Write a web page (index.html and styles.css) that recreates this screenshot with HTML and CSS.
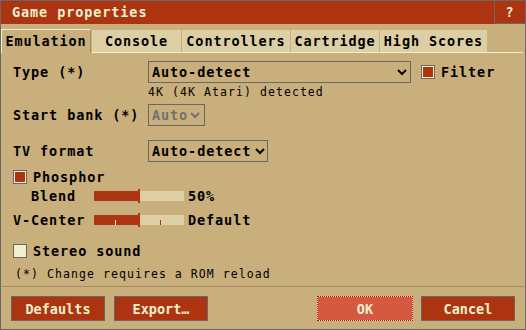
FILE: index.html
```html
<!DOCTYPE html>
<html lang="en">
<head>
    <meta charset="UTF-8">
    <title>Game properties</title>
    <link rel="stylesheet" href="styles.css">
</head>
<body>
    <div class="dialog">
        <div class="titlebar">
            <span class="title">Game properties</span>
            <span class="help">?</span>
        </div>

        <div class="tabs">
            <div class="tab active tab-emulation">Emulation</div>
            <div class="tab tab-console">Console</div>
            <div class="tab tab-controllers">Controllers</div>
            <div class="tab tab-cartridge">Cartridge</div>
            <div class="tab tab-scores">High Scores</div>
            <div class="tab-fill"></div>
        </div>

        <div class="panel">
            <div class="row row-type">
                <span class="label">Type (*)</span>
                <div class="select select-type">
                    <span>Auto-detect</span>
                    <svg class="chevron" viewBox="0 0 10 7" width="10" height="7"><path d="M1 1 L5 5 L9 1" /></svg>
                </div>
                <span class="check checked check-filter"></span>
                <span class="check-label">Filter</span>
            </div>
            <div class="detected">4K (4K Atari) detected</div>

            <div class="row row-bank">
                <span class="label">Start bank (*)</span>
                <div class="select select-bank disabled">
                    <span>Auto</span>
                    <svg class="chevron" viewBox="0 0 10 7" width="10" height="7"><path d="M1 1 L5 5 L9 1" /></svg>
                </div>
            </div>

            <div class="row row-tv">
                <span class="label">TV format</span>
                <div class="select select-tv">
                    <span>Auto-detect</span>
                    <svg class="chevron" viewBox="0 0 10 7" width="10" height="7"><path d="M1 1 L5 5 L9 1" /></svg>
                </div>
            </div>

            <div class="row row-sm row-phosphor">
                <span class="check checked"></span>
                <span class="check-label">Phosphor</span>
            </div>

            <div class="row row-sm row-blend">
                <span class="slider-label indent">Blend</span>
                <div class="slider">
                    <div class="fill" style="width: 45px"></div>
                    <div class="handle" style="left: 44px"></div>
                </div>
                <span class="slider-value">50%</span>
            </div>

            <div class="row row-sm row-vcenter">
                <span class="slider-label">V-Center</span>
                <div class="slider">
                    <div class="fill" style="width: 45px"></div>
                    <div class="tick tick-light" style="left: 21px"></div>
                    <div class="tick tick-red" style="left: 66px"></div>
                    <div class="handle" style="left: 44px"></div>
                </div>
                <span class="slider-value">Default</span>
            </div>

            <div class="row row-sm row-stereo">
                <span class="check"></span>
                <span class="check-label">Stereo sound</span>
            </div>

            <div class="note">(*) Change requires a ROM reload</div>
        </div>

        <div class="separator"></div>

        <div class="footer">
            <button class="btn">Defaults</button>
            <button class="btn btn-export">Export…</button>
            <div class="spacer"></div>
            <button class="btn btn-ok">OK</button>
            <button class="btn btn-cancel">Cancel</button>
        </div>
    </div>
</body>
</html>
```

FILE: styles.css
```css
/* Stella "standard" palette */
:root {
    --frame: #686868;
    --dlg: #c9af7c;
    --shadow: #a38c61;
    --light: #dccfa5;
    --cream: #f0f0cf;
    --red: #ac3410;
    --red-hi: #d55941;
    --focus: #c80000;
}

body {
    margin: 0;
    background: var(--dlg);
    font-family: "DejaVu Sans Mono", monospace;
    font-weight: bold;
    font-size: 13.5px;
    letter-spacing: 0.9px;
    color: #000;
}

.dialog {
    width: 526px;
    height: 330px;
    box-sizing: border-box;
    border: 1px solid var(--frame);
    background: var(--dlg);
    display: flex;
    flex-direction: column;
}

/* ---------- title bar ---------- */
.titlebar {
    height: 23px;
    display: flex;
    background: var(--red);
    color: var(--cream);
    line-height: 23px;
}
.title { flex: 1; padding-left: 11px; }
.help {
    width: 30px;
    border-left: 1px solid var(--frame);
    border-bottom: 1px solid var(--frame);
    text-align: center;
    line-height: 22px;
}

/* ---------- tabs ---------- */
.tabs {
    display: flex;
    height: 24px;
    margin-top: 5px;
    padding-right: 2px;
}
.tab {
    box-sizing: border-box;
    height: 23px;
    margin-top: 1px;
    background: var(--light);
    border-left: 1px solid var(--dlg);
    border-bottom: 1px solid var(--cream);
    text-align: center;
    line-height: 22px;
}
.tab.active {
    height: 24px;
    margin-top: 0;
    background: var(--dlg);
    border-top: 1px solid var(--cream);
    border-left: 1px solid var(--cream);
    border-right: 1px solid var(--shadow);
    border-bottom: none;
}
.tab-emulation { width: 90px; }
.tab-console { width: 90px; }
.tab-controllers { width: 109px; }
.tab-cartridge { width: 89px; }
.tab-scores { width: 108px; }
.tab-fill {
    flex: 1;
    height: 23px;
    margin-top: 1px;
    box-sizing: border-box;
    border-bottom: 1px solid var(--cream);
}

/* ---------- panel ---------- */
.panel { padding: 8px 12px 0 12px; }

.row {
    display: flex;
    align-items: center;
    height: 22px;
}
.row-sm { height: 18px; }

.row-bank { margin-top: 3px; }
.row-tv { margin-top: 14px; }
.row-phosphor { margin-top: 6px; }
.row-blend { margin-top: 1px; }
.row-vcenter { margin-top: 6px; }
.row-stereo { margin-top: 13px; }

.label { width: 135px; flex-shrink: 0; }

.select {
    box-sizing: border-box;
    height: 22px;
    border: 1px solid var(--frame);
    display: flex;
    align-items: center;
    justify-content: space-between;
    padding: 0 2px 0 3px;
}
.select-type { width: 263px; padding-right: 3px; }
.select-bank { width: 57px; padding-right: 4px; }
.select-tv { width: 120px; }
.select.disabled { color: #727272; }

.chevron { display: block; }
.chevron path {
    fill: none;
    stroke: #000;
    stroke-width: 2;
}
.disabled .chevron path { stroke: #727272; }

.check {
    box-sizing: border-box;
    width: 14px;
    height: 14px;
    border: 1px solid var(--frame);
    background: var(--cream);
    flex-shrink: 0;
}
.check.checked { box-shadow: inset 0 0 0 1px var(--cream), inset 0 0 0 6px var(--red); }
.check-filter { margin-left: 10px; }
.check-label { margin-left: 6px; }

.detected {
    margin-left: 135px;
    height: 18px;
    line-height: 18px;
    font-weight: normal;
    font-size: 11.5px;
    letter-spacing: 1.07px;
}

/* ---------- sliders ---------- */
.slider-label { width: 81px; flex-shrink: 0; }
.slider-label.indent { width: 63px; padding-left: 18px; }

.slider {
    position: relative;
    width: 90px;
    height: 10px;
    background: var(--light);
}
.slider .fill { height: 100%; background: var(--red); }
.slider .handle {
    position: absolute;
    top: -2px;
    bottom: -2px;
    width: 2px;
    background: var(--red);
}
.slider .tick {
    position: absolute;
    bottom: 0;
    width: 1px;
    height: 5px;
}
.tick-light { background: var(--cream); }
.tick-red { background: var(--red); }
.slider-value { margin-left: 4px; }

.note {
    margin-top: 5px;
    padding-left: 2px;
    height: 18px;
    line-height: 18px;
    font-weight: normal;
    font-size: 11.5px;
    letter-spacing: 1.07px;
}

/* ---------- footer ---------- */
.separator {
    height: 1px;
    margin: 3px 1px 0 1px;
    background: var(--shadow);
}

.footer {
    display: flex;
    margin-top: 9px;
    padding: 0 10px;
}
.spacer { flex: 1; }

.btn {
    box-sizing: border-box;
    width: 94px;
    height: 25px;
    padding: 0;
    border: 1px solid var(--frame);
    background: var(--red);
    color: var(--cream);
    font: inherit;
    font-weight: bold;
}
.btn-export { margin-left: 9px; }
.btn-ok {
    width: 96px;
    border: 1px dotted var(--focus);
    background: linear-gradient(var(--red-hi), var(--red-hi)) padding-box, var(--cream) border-box;
}
.btn-cancel { margin-left: 8px; }
```
